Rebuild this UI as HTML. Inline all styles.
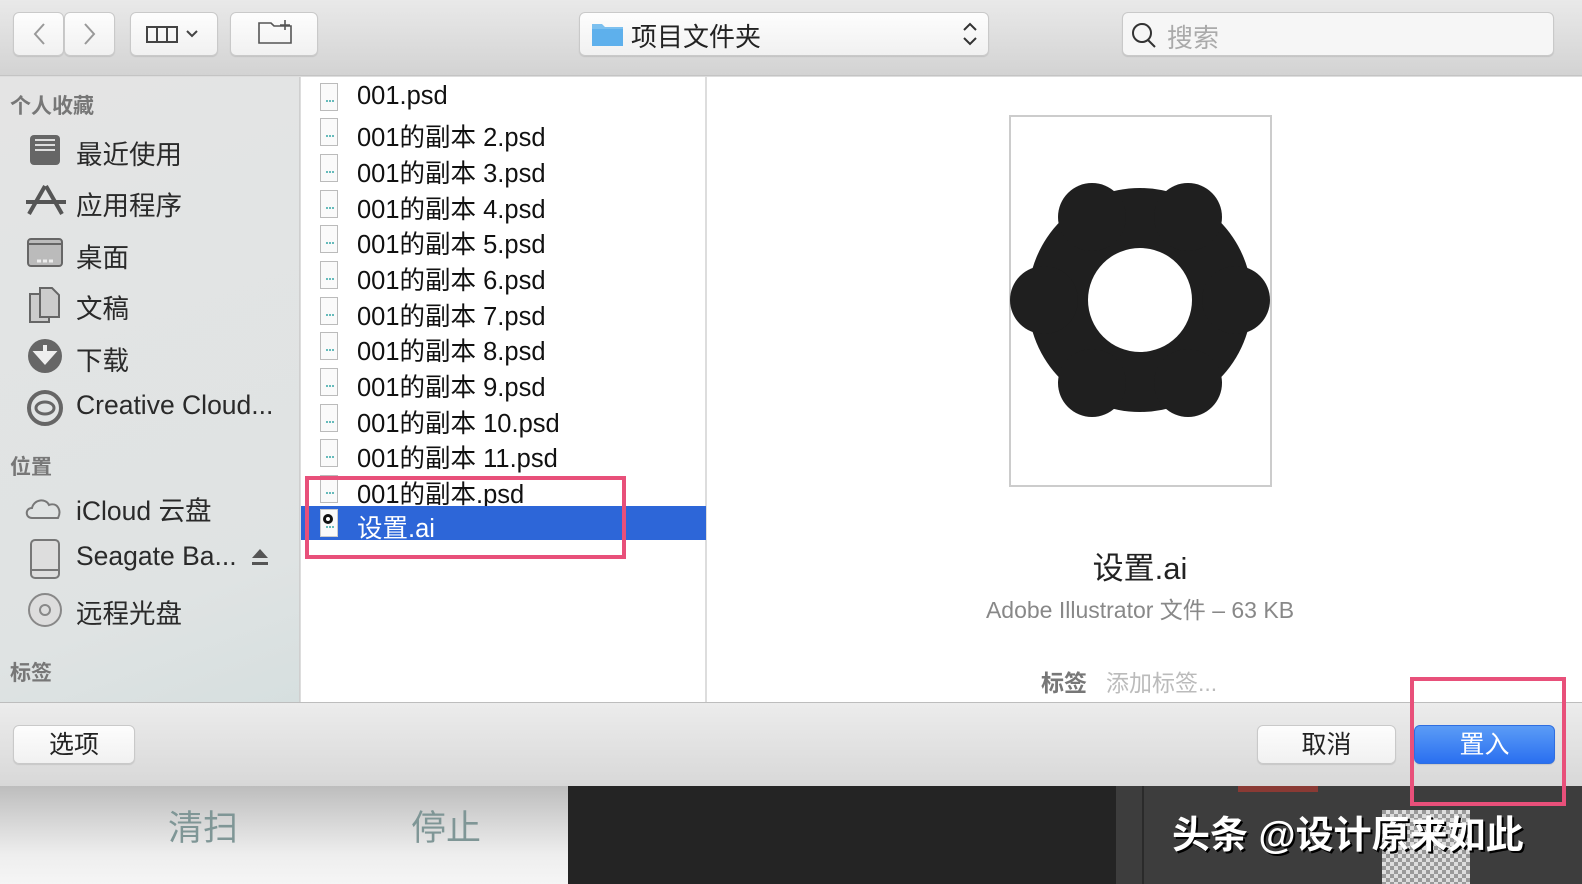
<!DOCTYPE html>
<html><head><meta charset="utf-8"><style>
*{margin:0;padding:0;box-sizing:border-box}
body{width:1582px;height:884px;overflow:hidden;position:relative;font-family:"Liberation Sans","Noto Sans CJK SC",sans-serif;background:#ddd}
.abs{position:absolute}
.tb{left:0;top:0;width:1582px;height:76px;background:linear-gradient(#e9e9e9,#d3d3d3);border-bottom:1px solid #c4c4c4}
.btn{position:absolute;background:linear-gradient(#fdfdfd,#f1f1f1);border:1px solid #c9c9c9;border-radius:6px;box-shadow:0 1px 1px rgba(0,0,0,.1)}
.side{left:0;top:77px;width:300px;height:625px;background:linear-gradient(160deg,#e4e4e4,#dfe3e3 80%,#d6dfdf);border-right:1px solid #cfcfcf}
.sh{position:absolute;left:10px;font-size:21px;color:#777;font-weight:bold}
.si{position:absolute;left:76px;font-size:26.5px;color:#2a2a2a}
.list{left:301px;top:77px;width:405px;height:625px;background:#fff;border-right:1px solid #ddd}
.row{position:absolute;left:0;width:405px;height:34px;font-size:25.5px;color:#111}
.row span{position:absolute;left:56px;top:2px}
.fi{position:absolute;left:19px;top:3px;width:18px;height:28px;border:1px solid #bbb;background:#fafafa}
.fi:after{content:"";position:absolute;left:5px;top:16px;width:8px;height:2px;border-top:2px dotted #6bb}
.prev{left:707px;top:77px;width:875px;height:625px;background:#fff}
.bot{left:0;top:702px;width:1582px;height:84px;background:linear-gradient(#ececec,#d8d8d8);border-top:1px solid #bdbdbd}
.pink{position:absolute;border:4px solid #e8507a}
</style></head><body>
<div class="abs tb"></div>
<div class="btn" style="left:13px;top:12px;width:51px;height:44px"></div>
<div class="btn" style="left:64px;top:12px;width:51px;height:44px"></div>
<svg class="abs" style="left:13px;top:12px" width="102" height="44"><path d="M31 12 L22 22 L31 32" stroke="#999" stroke-width="2" fill="none"/><path d="M72 12 L81 22 L72 32" stroke="#999" stroke-width="2" fill="none"/></svg>
<div class="btn" style="left:130px;top:12px;width:88px;height:44px"></div>
<svg class="abs" style="left:130px;top:12px" width="88" height="44"><rect x="17" y="15" width="30" height="15" fill="none" stroke="#444" stroke-width="2"/><path d="M27 15v15M37 15v15" stroke="#444" stroke-width="2"/><path d="M57 19l5 5 5-5" stroke="#444" stroke-width="2" fill="none"/></svg>
<div class="btn" style="left:230px;top:12px;width:88px;height:44px"></div>
<svg class="abs" style="left:230px;top:12px" width="88" height="44"><path d="M29 11v20h32V14H44l-3-3z" fill="none" stroke="#555" stroke-width="1.6"/><path d="M55 8v10M50 13h10" stroke="#555" stroke-width="1.6"/></svg>
<div class="btn" style="left:579px;top:12px;width:410px;height:44px"></div>
<svg class="abs" style="left:590px;top:20px" width="36" height="28"><path d="M2 4h10l3 3h18v19H2z" fill="#7cc0ef"/><path d="M2 9h31v17H2z" fill="#5eb0ec"/></svg>
<div class="abs" style="left:631px;top:17px;font-size:26px;color:#222">项目文件夹</div>
<svg class="abs" style="left:960px;top:20px" width="20" height="28"><path d="M4 10l6-6 6 6M4 18l6 6 6-6" stroke="#333" stroke-width="2" fill="none"/></svg>
<div class="btn" style="left:1122px;top:12px;width:432px;height:44px;background:#f6f6f6"></div>
<svg class="abs" style="left:1130px;top:20px" width="30" height="30"><circle cx="12" cy="13" r="9" fill="none" stroke="#333" stroke-width="2"/><path d="M18 20l7 7" stroke="#333" stroke-width="2"/></svg>
<div class="abs" style="left:1167px;top:18px;font-size:26px;color:#aaa">搜索</div>

<div class="abs side"></div>
<div class="sh" style="top:90px">个人收藏</div>
<div class="si" style="top:133px">最近使用</div>
<div class="si" style="top:184px">应用程序</div>
<div class="si" style="top:236px">桌面</div>
<div class="si" style="top:287px">文稿</div>
<div class="si" style="top:339px">下载</div>
<div class="si" style="top:390px">Creative Cloud...</div>
<div class="sh" style="top:451px">位置</div>
<div class="si" style="top:489px">iCloud 云盘</div>
<div class="si" style="top:541px">Seagate Ba...</div>
<div class="si" style="top:592px">远程光盘</div>
<div class="sh" style="top:657px">标签</div>
<svg class="abs" style="left:24px;top:130px" width="46" height="500">
<rect x="6" y="5" width="30" height="30" rx="4" fill="#666"/><path d="M11 10h20M11 15h20M11 20h20" stroke="#ddd" stroke-width="2"/>
<path d="M5 84l16-28M38 84l-16-28M2 72h40" stroke="#555" stroke-width="4"/>
<rect x="4" y="109" width="34" height="27" rx="3" fill="#bbb" stroke="#666" stroke-width="2"/><path d="M4 114h34" stroke="#666" stroke-width="2"/><path d="M13 131h16" stroke="#eee" stroke-width="3" stroke-dasharray="4 2"/>
<path d="M6 164h14l5 6v22H6z" fill="#ccc" stroke="#666" stroke-width="2"/><path d="M16 158h12l7 7v22H16z" fill="#ccc" stroke="#666" stroke-width="2"/>
<circle cx="21" cy="226" r="17" fill="#666"/><path d="M21 215v14M13 223l8 9 8-9z" stroke="#eee" stroke-width="4" fill="#eee"/>
<circle cx="21" cy="278" r="16" fill="none" stroke="#666" stroke-width="4"/><ellipse cx="21" cy="278" rx="9" ry="6" fill="none" stroke="#666" stroke-width="3"/>
<path d="M8 388c-7 0-7-10 0-10 2-9 14-10 17-3 8-3 13 5 9 13z" fill="none" stroke="#777" stroke-width="2"/>
<rect x="7" y="410" width="28" height="38" rx="4" fill="#ddd" stroke="#777" stroke-width="2"/><path d="M7 440h28" stroke="#777" stroke-width="2"/>
<circle cx="21" cy="480" r="16" fill="#ddd" stroke="#888" stroke-width="2"/><circle cx="21" cy="480" r="5" fill="none" stroke="#888" stroke-width="2"/>
</svg>
<svg class="abs" style="left:250px;top:546px" width="20" height="20"><path d="M2 12L10 3l8 9z M2 16h16v3H2z" fill="#555"/></svg>

<div class="abs list">
<div class="row" style="top:3px"><i class="fi"></i><span>001.psd</span></div>
<div class="row" style="top:38px"><i class="fi"></i><span>001的副本 2.psd</span></div>
<div class="row" style="top:74px"><i class="fi"></i><span>001的副本 3.psd</span></div>
<div class="row" style="top:110px"><i class="fi"></i><span>001的副本 4.psd</span></div>
<div class="row" style="top:145px"><i class="fi"></i><span>001的副本 5.psd</span></div>
<div class="row" style="top:181px"><i class="fi"></i><span>001的副本 6.psd</span></div>
<div class="row" style="top:217px"><i class="fi"></i><span>001的副本 7.psd</span></div>
<div class="row" style="top:252px"><i class="fi"></i><span>001的副本 8.psd</span></div>
<div class="row" style="top:288px"><i class="fi"></i><span>001的副本 9.psd</span></div>
<div class="row" style="top:324px"><i class="fi"></i><span>001的副本 10.psd</span></div>
<div class="row" style="top:359px"><i class="fi"></i><span>001的副本 11.psd</span></div>
<div class="row" style="top:395px"><i class="fi"></i><span>001的副本.psd</span></div>
<div class="row" style="top:429px;background:#2d66d8;color:#fff"><i class="fi" style="border-color:#ccc"></i><span>设置.ai</span></div>
</div>
<svg class="abs" style="left:321px;top:512px" width="14" height="14"><circle cx="7" cy="7" r="5" fill="#111"/><circle cx="7" cy="7" r="2" fill="#fff"/></svg>
<div class="pink" style="left:305px;top:476px;width:321px;height:83px"></div>

<div class="abs prev"></div>
<div class="abs" style="left:1009px;top:115px;width:263px;height:372px;border:2px solid #ccc;background:#fff"></div>
<svg class="abs" style="left:1000px;top:160px" width="280" height="280">
<g fill="#1f1f1f">
<circle cx="140" cy="140" r="112"/>
<circle cx="236" cy="140" r="34"/><circle cx="44" cy="140" r="34"/>
<circle cx="188" cy="57" r="34"/><circle cx="92" cy="57" r="34"/>
<circle cx="188" cy="223" r="34"/><circle cx="92" cy="223" r="34"/>
</g>
<circle cx="140" cy="140" r="52" fill="#fff"/>
</svg>
<div class="abs" style="left:1000px;top:543px;width:280px;text-align:center;font-size:31px;color:#222">设置.ai</div>
<div class="abs" style="left:900px;top:591px;width:480px;text-align:center;font-size:23px;color:#888">Adobe Illustrator 文件 – 63 KB</div>
<div class="abs" style="left:1041px;top:664px;font-size:23px;color:#777;font-weight:bold">标签</div>
<div class="abs" style="left:1106px;top:664px;font-size:23px;color:#bbb">添加标签...</div>

<div class="abs bot"></div>
<div class="btn" style="left:13px;top:725px;width:122px;height:39px;font-size:25px;text-align:center;line-height:38px;color:#222">选项</div>
<div class="btn" style="left:1257px;top:725px;width:139px;height:39px;font-size:25px;text-align:center;line-height:38px;color:#222">取消</div>
<div class="btn" style="left:1414px;top:725px;width:141px;height:39px;font-size:25px;text-align:center;line-height:38px;color:#fff;background:linear-gradient(#5b9cf6,#2a6ff0);border-color:#2f6ee0">置入</div>

<div class="abs" style="left:0;top:786px;width:568px;height:98px;background:linear-gradient(#bdbdbd,#eee 70%,#f5f5f5)"></div>
<div class="abs" style="left:168px;top:800px;font-size:35px;color:#7f9696">清扫</div>
<div class="abs" style="left:411px;top:800px;font-size:35px;color:#7f9696">停止</div>
<div class="abs" style="left:568px;top:786px;width:548px;height:98px;background:#242424"></div>
<div class="abs" style="left:1116px;top:786px;width:466px;height:98px;background:#3d3d3d"></div>
<div class="abs" style="left:1142px;top:786px;width:2px;height:98px;background:#2a2a2a"></div>
<div class="abs" style="left:1238px;top:786px;width:80px;height:6px;background:#8a3a34"></div>
<div class="abs" style="left:1382px;top:810px;width:88px;height:74px;background:repeating-conic-gradient(#ddd 0 25%,#999 0 50%) 0 0/8px 8px"></div>
<div class="abs" style="left:1172px;top:804px;font-size:38px;color:#fff;font-weight:bold;text-shadow:2px 2px 0 #000">头条 @设计原来如此</div>
<div class="pink" style="left:1410px;top:677px;width:156px;height:129px"></div>
</body></html>
